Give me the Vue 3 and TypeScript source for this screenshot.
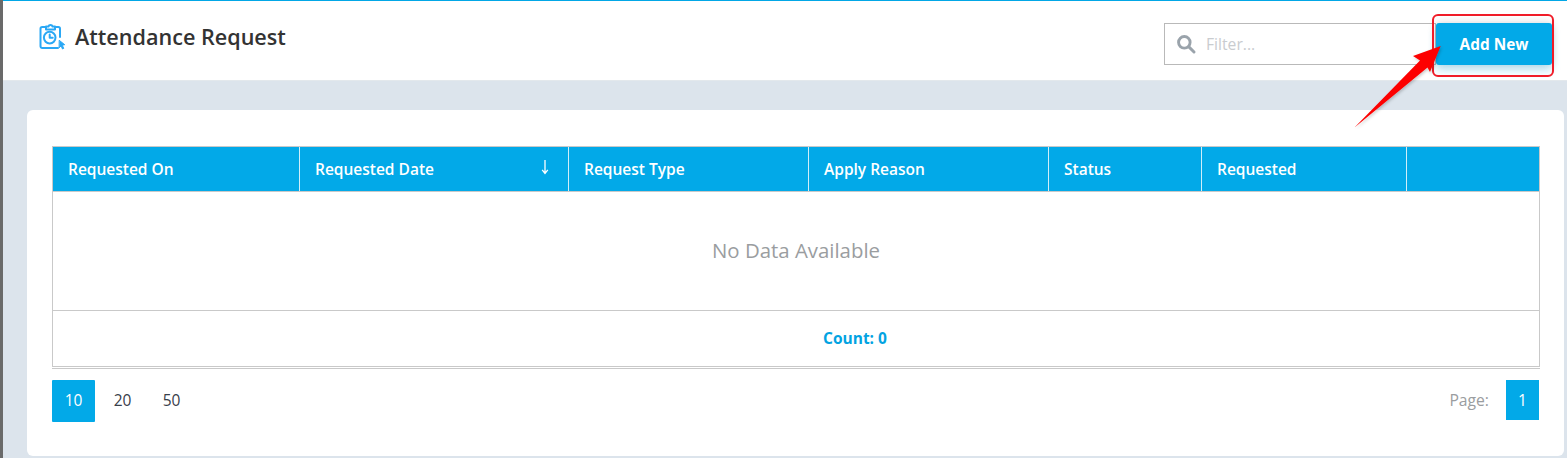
<script setup lang="ts">
interface Col { label: string; width: number; sort?: boolean }
const cols: Col[] = [
  { label: 'Requested On', width: 247 },
  { label: 'Requested Date', width: 269, sort: true },
  { label: 'Request Type', width: 240 },
  { label: 'Apply Reason', width: 240 },
  { label: 'Status', width: 153 },
  { label: 'Requested', width: 205 },
  { label: '', width: 132 },
]
const sizes = [10, 20, 50]
</script>

<template>
  <div class="page">
    <header class="topbar">
      <div class="title">
        <svg class="ticon" width="28" height="28" viewBox="0 0 28 28" fill="none" stroke="#2aa8f5" stroke-width="2" stroke-linejoin="round" stroke-linecap="round">
          <path d="M8 5H4.2a1.7 1.7 0 0 0-1.7 1.7v17.6A1.7 1.7 0 0 0 4.2 26H20" />
          <path d="M17 5h3.3A1.7 1.7 0 0 1 22 6.7V15" />
          <path d="M8 7.5V4.6h2.4a2.2 2.2 0 0 1 4.2 0H17v2.9z" />
          <circle cx="11.7" cy="15.6" r="5.8" />
          <path d="M11.7 12.4v3.4h3" />
          <path d="M21.5 18.5l5.2 4.2-2.4.5 1.4 3.2-1.2.6-1.4-3.1-1.7 1.6z" fill="#2aa8f5" stroke-width="1" />
        </svg>
        <span>Attendance Request</span>
      </div>
      <div class="tools">
        <label class="filter">
          <svg width="20" height="20" viewBox="0 0 18 18" fill="none" stroke="#9aa3ab" stroke-width="2.6" stroke-linecap="round">
            <circle cx="7.5" cy="7.5" r="5.2" />
            <path d="M11.6 11.6l4.6 4.6" />
          </svg>
          <input type="text" placeholder="Filter..." />
        </label>
        <button class="add">Add New</button>
      </div>
    </header>

    <main class="content">
      <section class="card">
        <div class="table">
          <div class="thead">
            <div v-for="c in cols" :key="c.label" class="th" :style="{ width: c.width + 'px' }">
              <span>{{ c.label }}</span>
              <svg v-if="c.sort" class="sort" width="8" height="16" viewBox="0 0 8 16" fill="none" stroke="#fff" stroke-width="1.3">
                <path d="M4 1v13M1.2 10.8L4 14.4l2.8-3.6" />
              </svg>
            </div>
          </div>
          <div class="empty">No Data Available</div>
          <div class="count">Count: 0</div>
        </div>
        <div class="rule"></div>
        <div class="pager">
          <div class="sizes">
            <span v-for="(s, i) in sizes" :key="s" class="size" :class="{ active: i === 0 }">{{ s }}</span>
          </div>
          <div class="pages">
            <span class="plabel">Page:</span>
            <span class="pnum">1</span>
          </div>
        </div>
      </section>
    </main>

    <div class="callout"></div>
    <svg class="arrow" width="100" height="92" viewBox="0 0 100 92">
      <defs>
        <filter id="sh" x="-20%" y="-20%" width="140%" height="140%">
          <feDropShadow dx="1" dy="1.5" stdDeviation="1.5" flood-color="#000" flood-opacity=".22" />
        </filter>
      </defs>
      <path d="M4.5 87.5 L70 20.5 L63 16 L90.7 6 L80 32 L77.5 27.5 Z" fill="#fd0505" filter="url(#sh)" />
    </svg>
  </div>
</template>

<style scoped>
.page {
  position: relative;
  width: 1567px;
  height: 458px;
  overflow: hidden;
  box-sizing: border-box;
  padding-left: 3px;
  background: #dce4ec;
  font-family: "Open Sans", "Noto Sans", sans-serif;
}
.page::before {
  content: "";
  position: absolute;
  left: 0;
  top: 0;
  bottom: 0;
  width: 3px;
  background: #6a6a6a;
}
.topbar {
  height: 81px;
  box-sizing: border-box;
  background: #fff;
  border-top: 1px solid #02a7e6;
  border-bottom: 1px solid #e3e8ec;
  display: flex;
  justify-content: space-between;
  padding: 0 15px 0 35px;
}
.title {
  display: flex;
  align-items: flex-start;
  gap: 9px;
  padding-top: 21px;
  font-size: 21.6px;
  line-height: 30px;
  color: #333;
  font-weight: 600;
}
.tools {
  display: flex;
  align-items: flex-start;
  padding-top: 22px;
}
.filter {
  width: 272px;
  height: 42px;
  box-sizing: border-box;
  border: 1px solid #b9b9b9;
  display: flex;
  align-items: center;
  gap: 10px;
  padding-left: 11px;
  background: #fff;
}
.filter input {
  border: 0;
  outline: 0;
  width: 200px;
  padding: 0;
  font: 400 15.7px "Open Sans", sans-serif;
  background: transparent;
}
.filter input::placeholder {
  color: #c9cccf;
  opacity: 1;
}
.add {
  width: 116px;
  height: 42px;
  border: 0;
  border-radius: 3px;
  background: #02a9e8;
  color: #fff;
  font: 700 15.4px "Open Sans", sans-serif;
  box-shadow: 0 6px 10px rgba(2, 169, 232, .22), 0 0 8px rgba(0, 0, 0, .16);
  position: relative;
  z-index: 1;
}
.content {
  padding: 29px 3px 0 24px;
}
.card {
  height: 346px;
  box-sizing: border-box;
  background: #fff;
  border-radius: 6px;
  padding: 36px 25px 0 25px;
}
.table {
  border: 1px solid #c9c9c9;
  width: 1488px;
  box-sizing: border-box;
}
.thead {
  display: flex;
  height: 44px;
  background: #02a9e8;
}
.th {
  position: relative;
  display: flex;
  align-items: center;
  box-sizing: border-box;
  padding-left: 15px;
  border-right: 1px solid #cfeefa;
  color: #fff;
  font-size: 15.5px;
  font-weight: 600;
}
.th:last-child {
  border-right: 0;
  flex: 1;
}
.sort {
  position: absolute;
  right: 19px;
  top: 12px;
}
.empty {
  height: 120px;
  box-sizing: border-box;
  padding-bottom: 2px;
  border-top: 1px solid #c9c9c9;
  border-bottom: 1px solid #c9c9c9;
  display: flex;
  align-items: center;
  justify-content: center;
  color: #9a9da0;
  font-size: 20.4px;
}
.count {
  height: 55px;
  display: flex;
  align-items: center;
  justify-content: center;
  padding: 0 0 2px 118px;
  box-sizing: border-box;
  color: #02a3e2;
  font-size: 15.5px;
  font-weight: 700;
}
.rule {
  width: 1488px;
  height: 1px;
  margin-top: 1px;
  background: #c9c9c9;
}
.pager {
  display: flex;
  justify-content: space-between;
  margin-top: 11px;
  width: 1487px;
}
.sizes {
  display: flex;
}
.size {
  width: 43px;
  height: 42px;
  margin-right: 6px;
  padding-bottom: 2px;
  box-sizing: border-box;
  display: flex;
  align-items: center;
  justify-content: center;
  border-radius: 1px;
  font-size: 15.5px;
  color: #38404a;
}
.size.active {
  background: #02a9e8;
  color: #fff;
}
.pages {
  display: flex;
  align-items: flex-start;
  gap: 17px;
}
.plabel {
  color: #9a9da0;
  font-size: 15.7px;
  line-height: 40px;
}
.pnum {
  width: 33px;
  height: 40px;
  display: flex;
  align-items: center;
  justify-content: center;
  background: #02a9e8;
  color: #fff;
  font-size: 15.5px;
}
.callout {
  position: absolute;
  left: 1432px;
  top: 14px;
  width: 122px;
  height: 63px;
  box-sizing: border-box;
  border: 2px solid #f01c28;
  border-radius: 6px;
  z-index: 2;
}
.arrow {
  position: absolute;
  left: 1350px;
  top: 40px;
  z-index: 3;
}
</style>
